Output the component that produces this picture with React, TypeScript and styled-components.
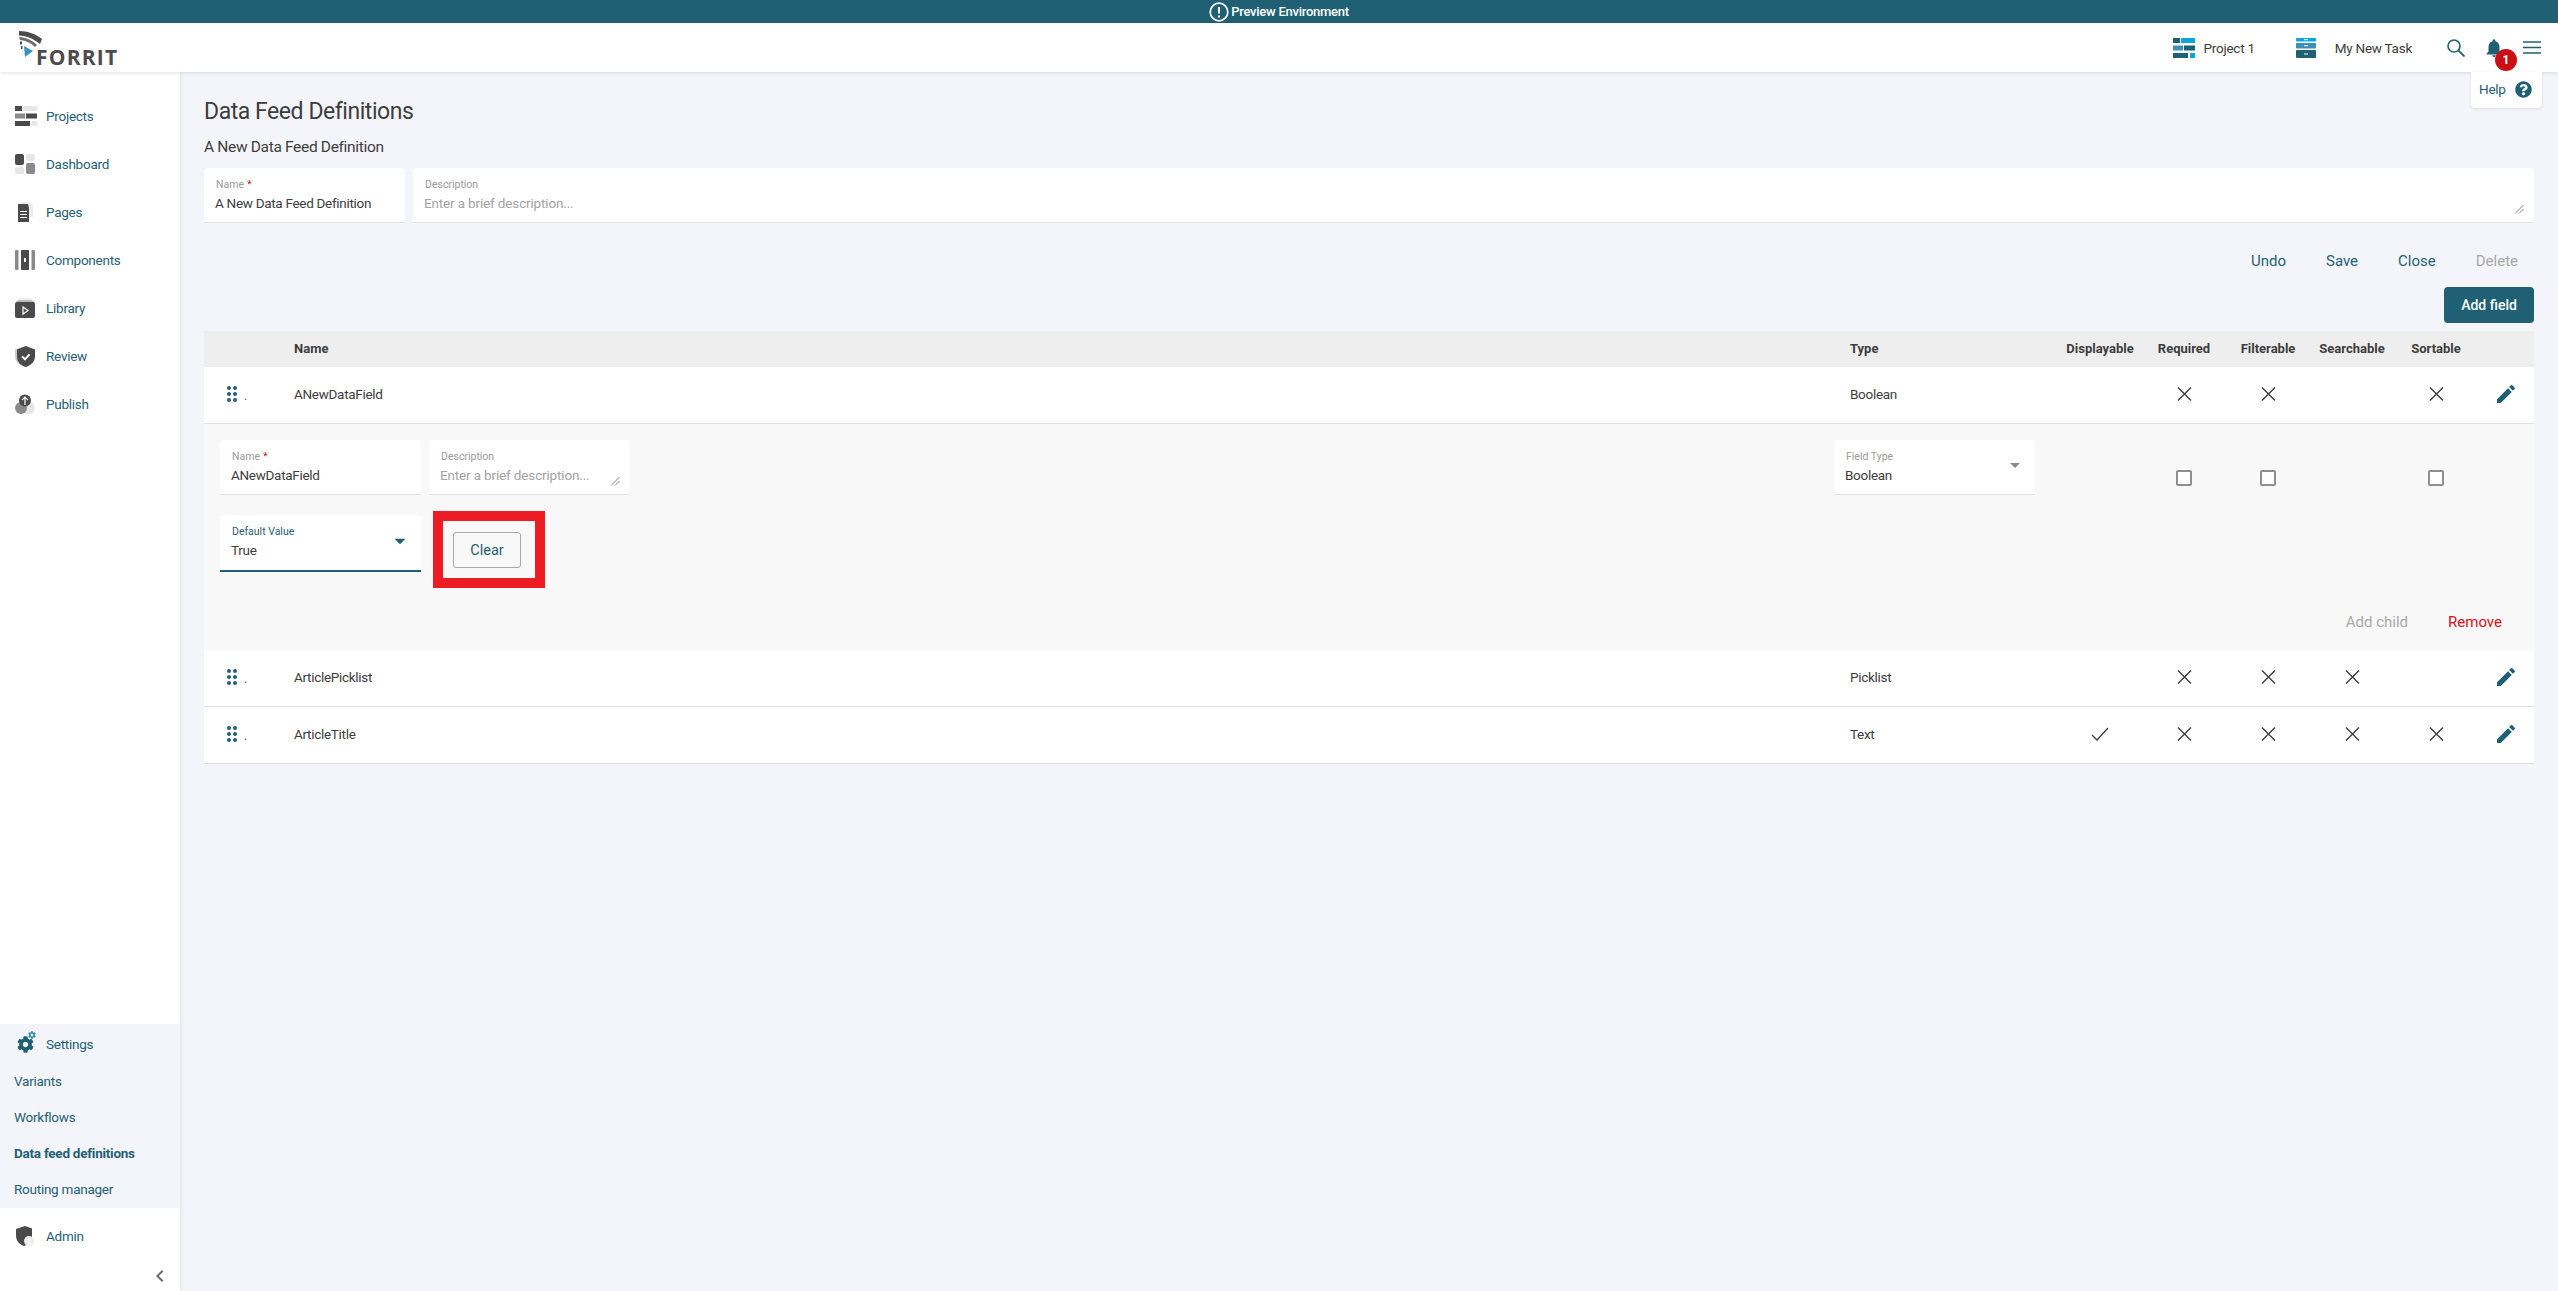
import React from 'react';
import styled, {createGlobalStyle} from 'styled-components';
import {MdEdit, MdNotifications, MdArrowDropDown, MdChevronLeft} from 'react-icons/md';
import {FaCog, FaQuestionCircle} from 'react-icons/fa';

const TEAL = '#1f6075';
const INK = '#3d3d3d';

const GlobalStyle = createGlobalStyle`
  html, body {
    margin: 0;
    padding: 0;
    height: 100%;
    background: #f4f5fa;
    font-family: Roboto, "Liberation Sans", sans-serif;
    overflow: hidden;
  }
  * { box-sizing: border-box; }
`;

const Page = styled.div`
  height: 1291px;
  display: flex;
  flex-direction: column;
`;

const Banner = styled.div`
  height: 23px;
  flex: none;
  background: ${TEAL};
  color: #fff;
  display: flex;
  align-items: center;
  justify-content: center;
  gap: 2px;
  font-size: 13px;
  font-weight: 500;
  letter-spacing: -0.25px;
`;

const Header = styled.header`
  position: relative;
  z-index: 3;
  height: 49px;
  flex: none;
  background: #fff;
  box-shadow: 0 1px 4px rgba(0, 0, 0, 0.12);
  display: flex;
  align-items: center;
  padding: 0 17px 0 18px;
  color: ${INK};
`;

const Logo = styled.div`
  display: flex;
  align-items: flex-end;
  height: 36px;
  margin-right: auto;
`;

const LogoWord = styled.span`
  font-family: "Open Sans", Roboto, sans-serif;
  font-size: 21px;
  line-height: 17px;
  font-weight: 700;
  letter-spacing: 1.2px;
  color: #4c4c4c;
  margin-left: -8px;
`;

const Crumb = styled.div<{$gap: number; $after: number}>`
  display: flex;
  align-items: center;
  gap: ${p => p.$gap}px;
  margin-right: ${p => p.$after}px;
  font-size: 13.5px;
  letter-spacing: -0.25px;
  color: ${INK};
`;

const HeaderIcon = styled.div<{$after: number}>`
  position: relative;
  display: flex;
  margin-right: ${p => p.$after}px;
  color: ${TEAL};
`;

const Badge = styled.span`
  position: absolute;
  left: 12px;
  top: 12px;
  width: 22px;
  height: 22px;
  border-radius: 50%;
  background: #cc0f14;
  color: #fff;
  font-size: 12px;
  font-weight: 700;
  display: flex;
  align-items: center;
  justify-content: center;
  z-index: 2;
`;

const HelpPop = styled.div`
  position: absolute;
  right: 16px;
  top: 100%;
  width: 71px;
  height: 36px;
  background: #fff;
  border-radius: 0 0 4px 4px;
  box-shadow: 0 1px 3px rgba(0, 0, 0, 0.1);
  display: flex;
  align-items: center;
  justify-content: space-between;
  padding: 0 10px 2px 8px;
  font-size: 13.5px;
  letter-spacing: -0.25px;
  color: ${TEAL};
`;

const Body = styled.div`
  flex: 1;
  display: flex;
  min-height: 0;
`;

const Sidebar = styled.nav`
  width: 180px;
  flex: none;
  background: #fff;
  box-shadow: 1px 0 4px rgba(0, 0, 0, 0.08);
  display: flex;
  flex-direction: column;
  padding-top: 20px;
  position: relative;
  z-index: 2;
`;

const NavItem = styled.div`
  height: 48px;
  display: flex;
  align-items: center;
  padding-left: 15px;
  font-size: 13.5px;
  letter-spacing: -0.25px;
  color: ${TEAL};
`;

const NavIcon = styled.span`
  position: relative;
  width: 31px;
  flex: none;
  display: flex;
`;

const SmallGear = styled.span`
  position: absolute;
  left: 13px;
  top: -3px;
  display: flex;
  color: #3d8fb5;
`;

const SettingsGroup = styled.div`
  margin-top: auto;
  height: 184px;
  background: #f4f5fa;
  display: flex;
  flex-direction: column;
`;

const SettingsHead = styled(NavItem)`
  height: 39px;
`;

const SubItem = styled.div<{$active?: boolean}>`
  height: 36px;
  display: flex;
  align-items: center;
  padding-left: 14px;
  font-size: 13.5px;
  letter-spacing: -0.25px;
  font-weight: ${p => (p.$active ? 700 : 400)};
  color: ${TEAL};
`;

const CollapseRow = styled.div`
  height: 28px;
  display: flex;
  justify-content: flex-end;
  align-items: flex-start;
  padding: 1px 8px 0 0;
  color: #6a6a6a;
`;

const AdminItem = styled(NavItem)`
  height: 55px;
`;

const Main = styled.main`
  flex: 1;
  min-width: 0;
  padding: 26px 24px 0;
`;

const Title = styled.h1`
  margin: 0;
  font-size: 23px;
  line-height: 28px;
  font-weight: 400;
  letter-spacing: -0.45px;
  color: ${INK};
`;

const SubTitle = styled.div`
  margin-top: 11px;
  font-size: 15.5px;
  line-height: 20px;
  letter-spacing: -0.33px;
  color: ${INK};
`;

const FieldRow = styled.div`
  margin-top: 11px;
  display: flex;
  gap: 8px;
`;

const Field = styled.div<{$width?: number; $focused?: boolean; $grow?: boolean}>`
  position: relative;
  width: ${p => (p.$width ? `${p.$width}px` : 'auto')};
  flex: ${p => (p.$grow ? 1 : 'none')};
  height: ${p => (p.$focused ? 57 : 55)}px;
  background: #fff;
  border-radius: 4px 4px 0 0;
  border-bottom: ${p => (p.$focused ? `2px solid ${TEAL}` : '1px solid #e4e4e4')};
  padding: 10px 11px 0;
`;

const FieldLabel = styled.div<{$focused?: boolean}>`
  font-size: 10.5px;
  line-height: 14px;
  padding-left: 1px;
  color: ${p => (p.$focused ? TEAL : '#9a9a9a')};
`;

const Star = styled.span`
  color: #d3111b;
  margin-left: 3px;
`;

const FieldValue = styled.div<{$placeholder?: boolean}>`
  font-size: 13.5px;
  line-height: 22px;
  letter-spacing: ${p => (p.$placeholder ? -0.15 : -0.3)}px;
  color: ${p => (p.$placeholder ? '#a3a3a3' : INK)};
`;

const Grip = styled.svg`
  position: absolute;
  right: 10px;
  bottom: 8px;
`;

const Caret = styled.span<{$color: string}>`
  position: absolute;
  right: 8px;
  top: 13px;
  display: flex;
  color: ${p => p.$color};
`;

const ActionRow = styled.div`
  margin-top: 20px;
  height: 36px;
  display: flex;
  justify-content: flex-end;
  gap: 8px;
`;

const TextButton = styled.div<{$tone?: string}>`
  height: 36px;
  padding: 0 16px;
  display: flex;
  align-items: center;
  font-size: 15px;
  color: ${p => p.$tone || TEAL};
`;

const AddRow = styled.div`
  margin-top: 8px;
  display: flex;
  justify-content: flex-end;
`;

const PrimaryButton = styled.div`
  width: 90px;
  height: 36px;
  background: ${TEAL};
  color: #fff;
  border-radius: 4px;
  display: flex;
  align-items: center;
  justify-content: center;
  font-size: 14px;
  font-weight: 500;
`;

const Table = styled.div`
  margin-top: 8px;
`;

const columns = '90px 1fr 208px repeat(5, 84px) 56px';

const HeadRow = styled.div`
  height: 36px;
  display: grid;
  grid-template-columns: ${columns};
  align-items: center;
  background: #eeeeee;
  padding-bottom: 2px;
  font-size: 13px;
  font-weight: 700;
  color: ${INK};
`;

const DataRow = styled.div`
  height: 57px;
  display: grid;
  grid-template-columns: ${columns};
  align-items: center;
  background: #fff;
  border-bottom: 1px solid #e0e0e0;
  padding-bottom: 2px;
  font-size: 13.5px;
  letter-spacing: -0.3px;
  color: ${INK};
`;

const CellCenter = styled.div`
  display: flex;
  justify-content: center;
  align-items: center;
  color: ${INK};
`;

const EditCell = styled(CellCenter)`
  color: ${TEAL};
`;

const Handle = styled.div`
  display: flex;
  align-items: flex-end;
  gap: 7px;
  padding-left: 23px;
  font-size: 12px;
  line-height: 12px;
  color: ${TEAL};
`;

const Expanded = styled.div`
  height: 226px;
  background: #f8f8f8;
  padding: 16px 0 0 16px;
  display: flex;
  flex-direction: column;
`;

const ExpandedTop = styled.div`
  display: grid;
  grid-template-columns: 201px 201px 1fr 224px repeat(5, 84px) 56px;
  height: 55px;
  align-items: start;
`;

const NameSlot = styled.div`
  display: flex;
  gap: 8px;
  grid-column: 1 / span 2;
`;

const CheckSlot = styled(CellCenter)`
  height: 76px;
`;

const Checkbox = styled.span`
  width: 16px;
  height: 16px;
  border: 2px solid #8f8f8f;
  border-radius: 2px;
  background: #fff;
`;

const DefaultRow = styled.div`
  margin-top: 20px;
  display: flex;
  align-items: flex-start;
`;

const Highlight = styled.div`
  margin: -4px 0 0 12px;
  width: 112px;
  height: 77px;
  border: 10px solid #ed1c24;
  padding: 11px 0 0 10px;
`;

const ClearButton = styled.div`
  width: 68px;
  height: 36px;
  border: 1px solid #a8a8a8;
  border-radius: 3px;
  display: flex;
  align-items: center;
  justify-content: center;
  font-size: 14.5px;
  color: ${TEAL};
`;

const RowActions = styled.div`
  margin-top: auto;
  height: 68px;
  display: flex;
  justify-content: flex-end;
  gap: 8px;
  padding: 16px 16px 0 0;
`;

const ProjectsIcon = ({colors}: {colors: string[]}) => (
  <svg width="22" height="20" viewBox="0 0 22 20">
    <rect x="0" y="0" width="7" height="5" fill={colors[0]} />
    <rect x="8" y="0" width="14" height="5" fill={colors[1]} />
    <rect x="0" y="7.5" width="10" height="5" fill={colors[2]} />
    <rect x="11" y="7.5" width="11" height="5" fill={colors[0]} />
    <rect x="0" y="15" width="15" height="5" fill={colors[0]} />
    <rect x="17" y="15" width="5" height="5" fill={colors[1]} />
  </svg>
);

const DashboardIcon = () => (
  <svg width="20" height="20" viewBox="0 0 20 20">
    <rect x="0" y="0" width="9" height="11" rx="2" fill="#4a4a4a" />
    <rect x="11" y="0" width="9" height="7" rx="2" fill="#e6e6e6" />
    <rect x="0" y="13" width="9" height="7" rx="2" fill="#e6e6e6" />
    <rect x="11" y="9" width="9" height="11" rx="2" fill="#8a8a8a" />
  </svg>
);

const PagesIcon = () => (
  <svg width="18" height="20" viewBox="0 0 18 20">
    <path d="M6 0h9l3 3v12H6z" fill="#ececec" />
    <path d="M3 2h10l1 4v14H3z" fill="#4a4a4a" />
    <path d="M5 9.500h7M5 12.500h7M5 15.500h7" stroke="#fff" strokeWidth="1.2" />
  </svg>
);

const ComponentsIcon = () => (
  <svg width="20" height="20" viewBox="0 0 20 20">
    <rect x="0" y="0" width="3.5" height="20" rx="1" fill="#8a8a8a" />
    <rect x="6" y="0" width="8" height="20" rx="1" fill="#4a4a4a" />
    <rect x="9" y="8" width="2" height="4" fill="#fff" />
    <rect x="16.5" y="0" width="3.5" height="20" rx="1" fill="#8a8a8a" />
  </svg>
);

const LibraryIcon = () => (
  <svg width="20" height="20" viewBox="0 0 20 20">
    <path d="M4 0h12l1 2H3z" fill="#ececec" />
    <path d="M1 5c0-2 1-3 3-3h12c2 0 3 1 3 3H1z" fill="#bdbdbd" />
    <rect x="0" y="4" width="20" height="16" rx="2" fill="#4a4a4a" />
    <path d="M8 9l5 3.500L8 16z" fill="none" stroke="#fff" strokeWidth="1.2" />
  </svg>
);

const ReviewIcon = () => (
  <svg width="20" height="21" viewBox="0 0 20 21">
    <path d="M10 0L0 3.500V10c0 6 4 9 10 11z" fill="#c9c9c9" />
    <path d="M11 0l9 3.500V10c0 6-4 9-9 11-6-2-9-5-9-11V3.500z" fill="#4a4a4a" />
    <path d="M7 10.500l3 2.800 4.500-5" fill="none" stroke="#fff" strokeWidth="2" />
  </svg>
);

const PublishIcon = () => (
  <svg width="20" height="20" viewBox="0 0 20 20">
    <circle cx="14" cy="14" r="6" fill="#e6e6e6" />
    <circle cx="6" cy="14" r="6" fill="#8a8a8a" />
    <circle cx="10" cy="6.500" r="6" fill="#4a4a4a" />
    <path d="M10 11V3M7 6l3-3 3 3" fill="none" stroke="#fff" strokeWidth="1.2" />
  </svg>
);

const AdminIcon = () => (
  <svg width="20" height="20" viewBox="0 0 20 20">
    <path d="M10 0l7 2.500V10c0 5-3 8-8 10C4 18 1 15 1 9V3z" fill="#4a4a4a" />
    <circle cx="14" cy="15" r="5" fill="#ececec" />
    <circle cx="14" cy="13.500" r="1.500" fill="#fff" />
    <path d="M11.500 18c.5-2 4.500-2 5 0" fill="#fff" />
  </svg>
);

const TaskIcon = () => (
  <svg width="20" height="20" viewBox="0 0 20 20">
    <rect x="0" y="0" width="20" height="3.5" rx="1" fill="#0ea5dc" />
    <rect x="0" y="5" width="20" height="5.5" rx="1" fill="#3d8fb5" />
    <rect x="0" y="12" width="20" height="8" rx="1" fill={TEAL} />
    <path d="M8 1.700h4M8 7.700h4M8 16h4" stroke="#fff" strokeWidth="1" />
  </svg>
);

const LogoMark = () => (
  <svg width="26" height="26" viewBox="0 0 26 26" style={{marginBottom: 9}}>
    <path d="M1 0c9 0 17 3 23 8l-2 5C16 8 9 5 1 4.500z" fill="#4c4c4c" />
    <path d="M1 6c7 .5 13 3 18 8l-2 2c-4-4-9-6.500-15-7z" fill="#6d6d6d" />
    <path d="M2 10.500h2v3H2zM3 15h1.500v3H3z" fill="#4c4c4c" />
    <path d="M6 15l9 5-8 6z" fill="#3a94c0" />
  </svg>
);

const HandleDots = () => (
  <svg width="10" height="16" viewBox="0 0 10 16" fill={TEAL}>
    <circle cx="2" cy="2" r="2" />
    <circle cx="8" cy="2" r="2" />
    <circle cx="2" cy="8" r="2" />
    <circle cx="8" cy="8" r="2" />
    <circle cx="2" cy="14" r="2" />
    <circle cx="8" cy="14" r="2" />
  </svg>
);

const Cross = () => (
  <svg width="15" height="14" viewBox="0 0 15 14">
    <path d="M1 .5l13 13M14 .5l-13 13" stroke={INK} strokeWidth="1.4" fill="none" />
  </svg>
);

const Tick = () => (
  <svg width="18" height="14" viewBox="0 0 18 14">
    <path d="M1 8l5 5L17 1" stroke={INK} strokeWidth="1.3" fill="none" />
  </svg>
);

const GripMark = () => (
  <Grip width="9" height="9" viewBox="0 0 9 9">
    <path d="M0 8.500L8.500 0M4 8.500L8.500 4" stroke="#666" strokeWidth="0.8" />
  </Grip>
);

interface FieldRowData {
  name: string;
  type: string;
  flags: boolean[];
}

const fields: FieldRowData[] = [
  {name: 'ANewDataField', type: 'Boolean', flags: [false, true, true, false, true]},
  {name: 'ArticlePicklist', type: 'Picklist', flags: [false, true, true, true, false]},
  {name: 'ArticleTitle', type: 'Text', flags: [true, true, true, true, true]},
];

const Row = ({row}: {row: FieldRowData}) => (
  <DataRow>
    <Handle>
      <HandleDots />.
    </Handle>
    <div>{row.name}</div>
    <div>{row.type}</div>
    {row.flags.map((on, i) => (
      <CellCenter key={i}>{on ? i === 0 ? <Tick /> : <Cross /> : null}</CellCenter>
    ))}
    <EditCell>
      <MdEdit size={24} />
    </EditCell>
  </DataRow>
);

const App = () => {
  return (
    <Page>
      <GlobalStyle />
      <Banner>
        <svg width="20" height="20" viewBox="0 0 20 20">
          <circle cx="10" cy="10" r="8.800" fill="none" stroke="#fff" strokeWidth="1.700" />
          <path d="M10 5v6.500M10 13.500v2" stroke="#fff" strokeWidth="2" />
        </svg>
        Preview Environment
      </Banner>
      <Header>
        <Logo>
          <LogoMark />
          <LogoWord>FORRIT</LogoWord>
        </Logo>
        <Crumb $gap={9} $after={41}>
          <ProjectsIcon colors={[TEAL, '#0ea5dc', '#3d8fb5']} />
          Project 1
        </Crumb>
        <Crumb $gap={19} $after={35}>
          <TaskIcon />
          My New Task
        </Crumb>
        <HeaderIcon $after={18}>
          <svg width="18" height="18" viewBox="0 0 18 18">
            <circle cx="7" cy="7" r="6" fill="none" stroke={TEAL} strokeWidth="1.600" />
            <path d="M11.500 11.500L17.500 17.500" stroke={TEAL} strokeWidth="1.800" />
          </svg>
        </HeaderIcon>
        <HeaderIcon $after={18}>
          <MdNotifications size={22} />
          <Badge>1</Badge>
        </HeaderIcon>
        <HeaderIcon $after={0}>
          <svg width="18" height="13" viewBox="0 0 18 13">
            <path d="M0 1h18M0 6.500h18M0 12h18" stroke={TEAL} strokeWidth="1.700" />
          </svg>
        </HeaderIcon>
        <HelpPop>
          Help
          <FaQuestionCircle size={17} />
        </HelpPop>
      </Header>
      <Body>
        <Sidebar>
          <NavItem>
            <NavIcon>
              <ProjectsIcon colors={['#4a4a4a', '#e6e6e6', '#8a8a8a']} />
            </NavIcon>
            Projects
          </NavItem>
          <NavItem>
            <NavIcon>
              <DashboardIcon />
            </NavIcon>
            Dashboard
          </NavItem>
          <NavItem>
            <NavIcon>
              <PagesIcon />
            </NavIcon>
            Pages
          </NavItem>
          <NavItem>
            <NavIcon>
              <ComponentsIcon />
            </NavIcon>
            Components
          </NavItem>
          <NavItem>
            <NavIcon>
              <LibraryIcon />
            </NavIcon>
            Library
          </NavItem>
          <NavItem>
            <NavIcon>
              <ReviewIcon />
            </NavIcon>
            Review
          </NavItem>
          <NavItem>
            <NavIcon>
              <PublishIcon />
            </NavIcon>
            Publish
          </NavItem>
          <SettingsGroup>
            <SettingsHead>
              <NavIcon>
                <FaCog size={17} color={TEAL} style={{marginLeft: 2, marginTop: 2}} />
                <SmallGear>
                  <FaCog size={8} />
                </SmallGear>
              </NavIcon>
              Settings
            </SettingsHead>
            <SubItem>Variants</SubItem>
            <SubItem>Workflows</SubItem>
            <SubItem $active>Data feed definitions</SubItem>
            <SubItem>Routing manager</SubItem>
          </SettingsGroup>
          <AdminItem>
            <NavIcon>
              <AdminIcon />
            </NavIcon>
            Admin
          </AdminItem>
          <CollapseRow>
            <MdChevronLeft size={24} />
          </CollapseRow>
        </Sidebar>
        <Main>
          <Title>Data Feed Definitions</Title>
          <SubTitle>A New Data Feed Definition</SubTitle>
          <FieldRow>
            <Field $width={201}>
              <FieldLabel>
                Name<Star>*</Star>
              </FieldLabel>
              <FieldValue>A New Data Feed Definition</FieldValue>
            </Field>
            <Field $grow>
              <FieldLabel>Description</FieldLabel>
              <FieldValue $placeholder>Enter a brief description...</FieldValue>
              <GripMark />
            </Field>
          </FieldRow>
          <ActionRow>
            <TextButton>Undo</TextButton>
            <TextButton>Save</TextButton>
            <TextButton>Close</TextButton>
            <TextButton $tone="#a8a8a8">Delete</TextButton>
          </ActionRow>
          <AddRow>
            <PrimaryButton>Add field</PrimaryButton>
          </AddRow>
          <Table>
            <HeadRow>
              <span />
              <div>Name</div>
              <div>Type</div>
              <CellCenter>Displayable</CellCenter>
              <CellCenter>Required</CellCenter>
              <CellCenter>Filterable</CellCenter>
              <CellCenter>Searchable</CellCenter>
              <CellCenter>Sortable</CellCenter>
              <span />
            </HeadRow>
            <Row row={fields[0]} />
            <Expanded>
              <ExpandedTop>
                <NameSlot>
                  <Field $width={201}>
                    <FieldLabel>
                      Name<Star>*</Star>
                    </FieldLabel>
                    <FieldValue>ANewDataField</FieldValue>
                  </Field>
                  <Field $width={201}>
                    <FieldLabel>Description</FieldLabel>
                    <FieldValue $placeholder>Enter a brief description...</FieldValue>
                    <GripMark />
                  </Field>
                </NameSlot>
                <span />
                <Field $width={201}>
                  <FieldLabel>Field Type</FieldLabel>
                  <FieldValue>Boolean</FieldValue>
                  <Caret $color="#8a8a8a">
                    <MdArrowDropDown size={24} />
                  </Caret>
                </Field>
                <span />
                <CheckSlot>
                  <Checkbox />
                </CheckSlot>
                <CheckSlot>
                  <Checkbox />
                </CheckSlot>
                <span />
                <CheckSlot>
                  <Checkbox />
                </CheckSlot>
              </ExpandedTop>
              <DefaultRow>
                <Field $width={201} $focused>
                  <FieldLabel $focused>Default Value</FieldLabel>
                  <FieldValue>True</FieldValue>
                  <Caret $color={TEAL}>
                    <MdArrowDropDown size={26} />
                  </Caret>
                </Field>
                <Highlight>
                  <ClearButton>Clear</ClearButton>
                </Highlight>
              </DefaultRow>
              <RowActions>
                <TextButton $tone="#a8a8a8">Add child</TextButton>
                <TextButton $tone="#d3111b">Remove</TextButton>
              </RowActions>
            </Expanded>
            <Row row={fields[1]} />
            <Row row={fields[2]} />
          </Table>
        </Main>
      </Body>
    </Page>
  );
};

export default App;
